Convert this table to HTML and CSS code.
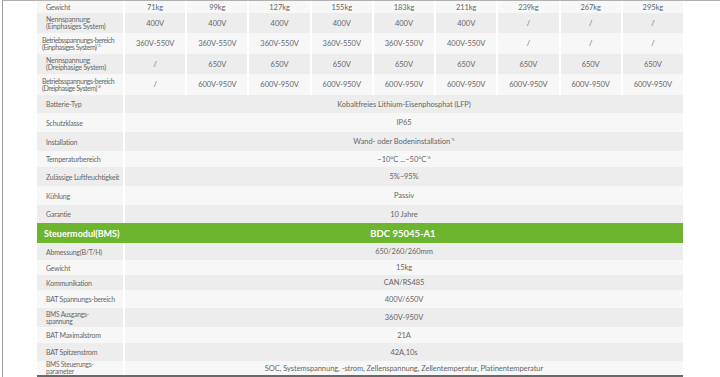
FILE: index.html
```html
<!DOCTYPE html>
<html lang="de">
<head>
<meta charset="utf-8">
<title>Technische Daten</title>
<link rel="stylesheet" href="styles.css">
</head>
<body>
<div class="frame">
  <div class="spec">
    <div class="row light h12">
      <div class="lbl"><span>Gewicht</span></div>
      <div class="val">71kg</div><div class="val">99kg</div><div class="val">127kg</div><div class="val">155kg</div><div class="val">183kg</div><div class="val">211kg</div><div class="val">239kg</div><div class="val">267kg</div><div class="val">295kg</div>
    </div>
    <div class="row dark h20">
      <div class="lbl two"><span>Nennspannung<br>(Einphasiges System)</span></div>
      <div class="val">400V</div><div class="val">400V</div><div class="val">400V</div><div class="val">400V</div><div class="val">400V</div><div class="val">400V</div><div class="val">/</div><div class="val">/</div><div class="val">/</div>
    </div>
    <div class="row light h21">
      <div class="lbl two tight"><span>Betriebsspannungs-bereich<br>(Einphasiges System)<sup>*3</sup></span></div>
      <div class="val">360V-550V</div><div class="val">360V-550V</div><div class="val">360V-550V</div><div class="val">360V-550V</div><div class="val">360V-550V</div><div class="val">400V-550V</div><div class="val">/</div><div class="val">/</div><div class="val">/</div>
    </div>
    <div class="row dark h20">
      <div class="lbl two"><span>Nennspannung<br>(Dreiphasige System)</span></div>
      <div class="val">/</div><div class="val">650V</div><div class="val">650V</div><div class="val">650V</div><div class="val">650V</div><div class="val">650V</div><div class="val">650V</div><div class="val">650V</div><div class="val">650V</div>
    </div>
    <div class="row light h21">
      <div class="lbl two tight"><span>Betriebsspannungs-bereich<br>(Dreiphasige System)<sup>*4</sup></span></div>
      <div class="val">/</div><div class="val">600V-950V</div><div class="val">600V-950V</div><div class="val">600V-950V</div><div class="val">600V-950V</div><div class="val">600V-950V</div><div class="val">600V-950V</div><div class="val">600V-950V</div><div class="val">600V-950V</div>
    </div>
    <div class="row dark h18">
      <div class="lbl"><span>Batterie-Typ</span></div>
      <div class="val wide"><span>Kobaltfreies Lithium-Eisenphosphat (LFP)</span></div>
    </div>
    <div class="row light h19">
      <div class="lbl"><span>Schutzklasse</span></div>
      <div class="val wide"><span>IP65</span></div>
    </div>
    <div class="row dark h19">
      <div class="lbl"><span>Installation</span></div>
      <div class="val wide"><span>Wand- oder Bodeninstallation<sup>*5</sup></span></div>
    </div>
    <div class="row light h16">
      <div class="lbl"><span>Temperaturbereich</span></div>
      <div class="val wide"><span>−10°C ...−50°C<sup>*6</sup></span></div>
    </div>
    <div class="row dark h19">
      <div class="lbl"><span>Zulässige Luftfeuchtigkeit</span></div>
      <div class="val wide"><span>5%~95%</span></div>
    </div>
    <div class="row light h19">
      <div class="lbl"><span>Kühlung</span></div>
      <div class="val wide"><span>Passiv</span></div>
    </div>
    <div class="row dark h18">
      <div class="lbl"><span>Garantie</span></div>
      <div class="val wide"><span>10 Jahre</span></div>
    </div>
    <div class="row head h20">
      <div class="hlbl"><span>Steuermodul(BMS)</span></div>
      <div class="hval"><span>BDC 95045-A1</span></div>
    </div>
    <div class="row dark h17">
      <div class="lbl"><span>Abmessung(B/T/H)</span></div>
      <div class="val wide"><span>650/260/260mm</span></div>
    </div>
    <div class="row light h15">
      <div class="lbl"><span>Gewicht</span></div>
      <div class="val wide"><span>15kg</span></div>
    </div>
    <div class="row dark h15">
      <div class="lbl"><span>Kommunikation</span></div>
      <div class="val wide"><span>CAN/RS485</span></div>
    </div>
    <div class="row light h18">
      <div class="lbl"><span>BAT Spannungs-bereich</span></div>
      <div class="val wide"><span>400V/650V</span></div>
    </div>
    <div class="row dark h19">
      <div class="lbl two squeeze"><span>BMS Ausgangs-<br>spannung</span></div>
      <div class="val wide"><span>360V-950V</span></div>
    </div>
    <div class="row light h16">
      <div class="lbl"><span>BAT Maximalstrom</span></div>
      <div class="val wide"><span>21A</span></div>
    </div>
    <div class="row dark h18">
      <div class="lbl"><span>BAT Spitzenstrom</span></div>
      <div class="val wide"><span>42A,10s</span></div>
    </div>
    <div class="row light h14">
      <div class="lbl two squeeze"><span>BMS Steuerungs-<br>parameter</span></div>
      <div class="val wide"><span>SOC, Systemspannung, -strom, Zellenspannung, Zellentemperatur, Platinentemperatur</span></div>
    </div>
  </div>
</div>
</body>
</html>
```

FILE: styles.css
```css
html, body {
  margin: 0;
  padding: 0;
  background: #ffffff;
}

body {
  font-family: Lato, "Liberation Sans", sans-serif;
  color: #666666;
  width: 720px;
  height: 377px;
  overflow: hidden;
}

.frame {
  margin-left: 2px;
  height: 376px;
  border-left: 1px solid #9a9a9a;
  border-top: 1px solid #b0b0b0;
}

.spec {
  margin-left: 34px;
  width: 646px;
  border-bottom: 2px solid #6a6a6a;
}

.row {
  display: grid;
  grid-template-columns: 86px repeat(9, 1fr);
  column-gap: 2px;
}

.h12 { height: 12px; }
.h14 { height: 14px; }
.h15 { height: 15px; }
.h16 { height: 16px; }
.h17 { height: 17px; }
.h18 { height: 18px; }
.h19 { height: 19px; }
.h20 { height: 20px; }
.h21 { height: 21px; }

.row > div {
  display: flex;
  align-items: center;
  white-space: nowrap;
  min-width: 0;
}

.dark > div { background: #ededed; }
.light > div { background: #f7f7f7; }

.lbl {
  padding-left: 9px;
  font-size: 7px;
  line-height: 8px;
  letter-spacing: -0.2px;
}

.lbl.two {
  line-height: 7px;
}

.lbl.tight {
  padding-left: 5px;
  letter-spacing: -0.45px;
}

.lbl.squeeze {
  line-height: 7px;
  font-size: 6.6px;
}

.val {
  justify-content: center;
  font-size: 7.5px;
  letter-spacing: -0.05px;
}

.val.wide {
  grid-column: span 9;
}

sup {
  font-size: 4.5px;
  line-height: 0;
  vertical-align: 3px;
}

.head {
  background: #6db42f;
  column-gap: 0;
}

.head > div {
  color: #ffffff;
  font-weight: 700;
}

.hlbl {
  padding-left: 7px;
  font-size: 9px;
  letter-spacing: 0px;
}

.hval {
  grid-column: span 9;
  justify-content: center;
  font-size: 9.5px;
  letter-spacing: 0px;
}
```
